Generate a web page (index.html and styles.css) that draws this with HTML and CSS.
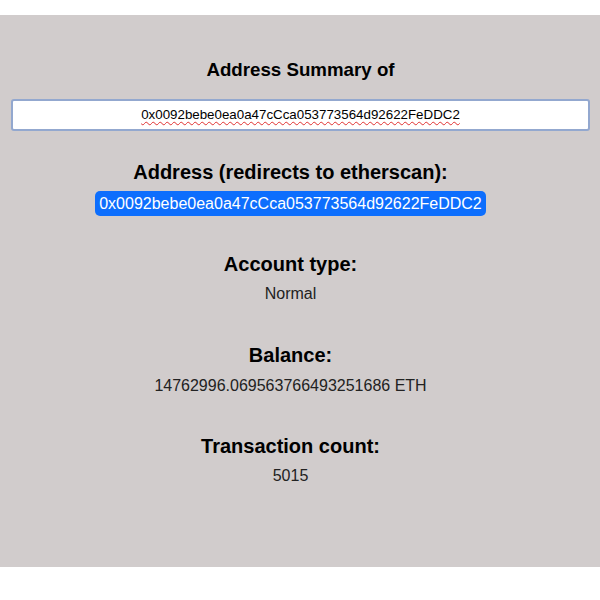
FILE: index.html
```html
<!DOCTYPE html>
<html>
<head>
<meta charset="utf-8">
<link rel="stylesheet" href="styles.css">
</head>
<body>
<div class="page">
  <h3 class="title">Address Summary of</h3>
  <div class="addr-input" contenteditable="true" spellcheck="false"><span class="misspelled">0x0092bebe0ea0a47cCca053773564d92622FeDDC2</span></div>
  <div class="details">
    <h2 class="label first">Address (redirects to etherscan):</h2>
    <a class="badge" href="#">0x0092bebe0ea0a47cCca053773564d92622FeDDC2</a>
    <h2 class="label type">Account type:</h2>
    <p class="value">Normal</p>
    <h2 class="label balance">Balance:</h2>
    <p class="value wide">14762996.069563766493251686 ETH</p>
    <h2 class="label count">Transaction count:</h2>
    <p class="value">5015</p>
  </div>
</div>
</body>
</html>
```
FILE: styles.css
```css
html, body {
  margin: 0;
  padding: 0;
  background: #ffffff;
}
body {
  font-family: "Liberation Sans", Arial, sans-serif;
}
.page {
  margin-top: 15px;
  background: #d1cccc;
  padding: 44px 10px 82px 11px;
  display: flex;
  flex-direction: column;
  align-items: center;
  text-align: center;
}
.title {
  margin: 0;
  font-size: 18.72px;
  line-height: 22px;
  font-weight: bold;
  color: #000;
}
.addr-input {
  box-sizing: border-box;
  align-self: stretch;
  margin: 18px 0 0 0;
  height: 32px;
  border: 2px solid #93a8cf;
  border-radius: 3px;
  background: #fff;
  font-size: 13.333px;
  line-height: 28px;
  color: #000;
  text-align: center;
  outline: none;
  padding: 0 2px;
  white-space: nowrap;
  overflow: hidden;
}
.misspelled {
  text-decoration: underline wavy #e03030;
  text-decoration-thickness: 1px;
  text-underline-offset: 2px;
  text-decoration-skip-ink: none;
}
.details {
  align-self: stretch;
  display: flex;
  flex-direction: column;
  align-items: center;
  padding-right: 20px;
}
.label {
  margin: 0;
  font-size: 20px;
  line-height: 23px;
  font-weight: bold;
  color: #000;
}
.label.first { margin-top: 30px; }
.label.type { margin-top: 37px; }
.label.balance { margin-top: 41px; }
.label.count { margin-top: 40px; }
.badge {
  margin-top: 7px;
  display: block;
  height: 25px;
  box-sizing: border-box;
  padding: 3px 4px 0 4px;
  line-height: 19px;
  font-size: 16px;
  color: #fff;
  background: #0d6efd;
  border-radius: 5px;
  text-decoration: none;
}
.value {
  margin: 9px 0 0 0;
  font-size: 16px;
  line-height: 18px;
  color: #222;
}
.value.wide { margin-top: 10px; }
```
